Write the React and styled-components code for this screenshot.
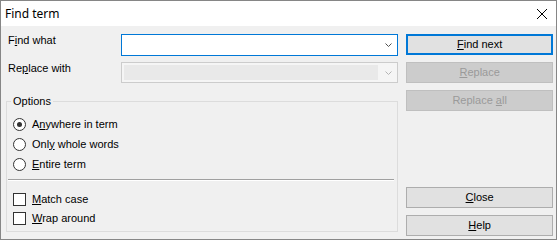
import styled, { createGlobalStyle } from 'styled-components';

const GlobalStyle = createGlobalStyle`
  html, body {
    margin: 0;
    padding: 0;
    background: #fff;
  }
  * {
    box-sizing: border-box;
  }
`;

const Window = styled.div`
  width: 557px;
  height: 240px;
  border: 1px solid #868686;
  display: flex;
  flex-direction: column;
  background: #f0f0f0;
  font-family: "Liberation Sans", Arial, sans-serif;
  font-size: 11px;
  line-height: 13px;
  color: #000;
`;

const TitleBar = styled.div`
  height: 25px;
  flex: none;
  background: #fff;
  display: flex;
  align-items: center;
  justify-content: space-between;
  padding: 0 9px 0 4px;
  font-family: "Noto Sans", sans-serif;
  font-size: 12px;
`;

const CloseX = styled.svg`
  width: 10px;
  height: 10px;
  margin-top: 1px;
`;

const Body = styled.div`
  flex: 1;
  display: flex;
  gap: 8px;
  padding: 8px 3px 3px 5px;
`;

const LeftCol = styled.div`
  width: 393px;
  display: flex;
  flex-direction: column;
`;

const FieldRow = styled.div`
  display: flex;
  align-items: flex-start;
  height: ${p => p.$h}px;
  margin-bottom: ${p => p.$mb || 0}px;
`;

const Label = styled.div`
  width: 115px;
  padding-left: 2px;
  color: ${p => (p.$disabled ? '#000' : '#000')};
`;

const Combo = styled.div`
  width: 277px;
  height: 100%;
  display: flex;
  align-items: center;
  border: 1px solid ${p => (p.$disabled ? '#cccccc' : '#0078d7')};
  background: ${p => (p.$disabled ? '#f5f5f5' : '#fff')};
  padding: ${p => (p.$disabled ? '2px' : '0')};
`;

const ComboEdit = styled.div`
  flex: 1;
  height: 100%;
  background: ${p => (p.$disabled ? '#e9e9e9' : 'transparent')};
`;

const Chevron = styled.svg`
  width: 7px;
  height: 4px;
  margin: 0 ${p => (p.$disabled ? '3px' : '5px')} 0 ${p => (p.$disabled ? '7px' : '0')};
`;

const Group = styled.fieldset`
  margin: 12px 0 0;
  border: 1px solid #dcdcdc;
  padding: 6px 2px 3px 6px;
  min-width: 0;
`;

const Legend = styled.legend`
  padding: 0 2px;
  margin-left: -2px;
  line-height: 13px;
`;

const OptionRow = styled.label`
  display: flex;
  align-items: center;
  height: ${p => p.$h}px;
  gap: 6px;
`;

const Radio = styled.span`
  width: 13px;
  height: 13px;
  border-radius: 50%;
  border: 1px solid #333;
  background: #fff;
  display: flex;
  align-items: center;
  justify-content: center;
  &::after {
    content: '';
    width: 5px;
    height: 5px;
    border-radius: 50%;
    background: ${p => (p.$checked ? '#333' : 'transparent')};
  }
`;

const Check = styled.span`
  width: 13px;
  height: 13px;
  border: 1px solid #333;
  background: #fff;
`;

const Separator = styled.div`
  margin: 5px 1px 9px -5px;
  height: 2px;
  border-top: 1px solid #a0a0a0;
  border-bottom: 1px solid #fff;
`;

const RightCol = styled.div`
  width: 147px;
  display: flex;
  flex-direction: column;
  gap: 7px;
`;

const Button = styled.div`
  height: 21px;
  flex: none;
  display: flex;
  align-items: center;
  justify-content: center;
  background: ${p => (p.$disabled ? '#cccccc' : '#e1e1e1')};
  border: ${p => (p.$default ? '2px solid #0078d7' : `1px solid ${p.$disabled ? '#bfbfbf' : '#adadad'}`)};
  color: ${p => (p.$disabled ? '#9a9a9a' : '#000')};
  margin-top: ${p => (p.$push ? 'auto' : '0')};
`;

const Key = styled.span`
  text-decoration: underline;
  text-underline-offset: 1px;
`;

function ChevronIcon({ disabled }) {
  return (
    <Chevron $disabled={disabled} viewBox="0 0 7 4">
      <path d="M0.5 0.5 L3.5 3.5 L6.5 0.5" fill="none" stroke={disabled ? '#b4b4b4' : '#505050'} strokeWidth="1" />
    </Chevron>
  );
}

export default function App() {
  return (
    <>
      <GlobalStyle />
      <Window>
        <TitleBar>
          <span>Find term</span>
          <CloseX viewBox="0 0 10 10">
            <path d="M0 0 L10 10 M10 0 L0 10" stroke="#000" strokeWidth="1" />
          </CloseX>
        </TitleBar>
        <Body>
          <LeftCol>
            <FieldRow $h={22} $mb={6}>
              <Label>F<Key>i</Key>nd what</Label>
              <Combo>
                <ComboEdit />
                <ChevronIcon />
              </Combo>
            </FieldRow>
            <FieldRow $h={21}>
              <Label>Re<Key>p</Key>lace with</Label>
              <Combo $disabled>
                <ComboEdit $disabled />
                <ChevronIcon disabled />
              </Combo>
            </FieldRow>
            <Group>
              <Legend>Options</Legend>
              <OptionRow $h={20}>
                <Radio $checked />
                <span>A<Key>n</Key>ywhere in term</span>
              </OptionRow>
              <OptionRow $h={20}>
                <Radio />
                <span>Onl<Key>y</Key> whole words</span>
              </OptionRow>
              <OptionRow $h={20}>
                <Radio />
                <span><Key>E</Key>ntire term</span>
              </OptionRow>
              <Separator />
              <OptionRow $h={19}>
                <Check />
                <span><Key>M</Key>atch case</span>
              </OptionRow>
              <OptionRow $h={19}>
                <Check />
                <span><Key>W</Key>rap around</span>
              </OptionRow>
            </Group>
          </LeftCol>
          <RightCol>
            <Button $default><span><Key>F</Key>ind next</span></Button>
            <Button $disabled><span><Key>R</Key>eplace</span></Button>
            <Button $disabled><span>Replace <Key>a</Key>ll</span></Button>
            <Button $push><span><Key>C</Key>lose</span></Button>
            <Button><span><Key>H</Key>elp</span></Button>
          </RightCol>
        </Body>
      </Window>
    </>
  );
}
